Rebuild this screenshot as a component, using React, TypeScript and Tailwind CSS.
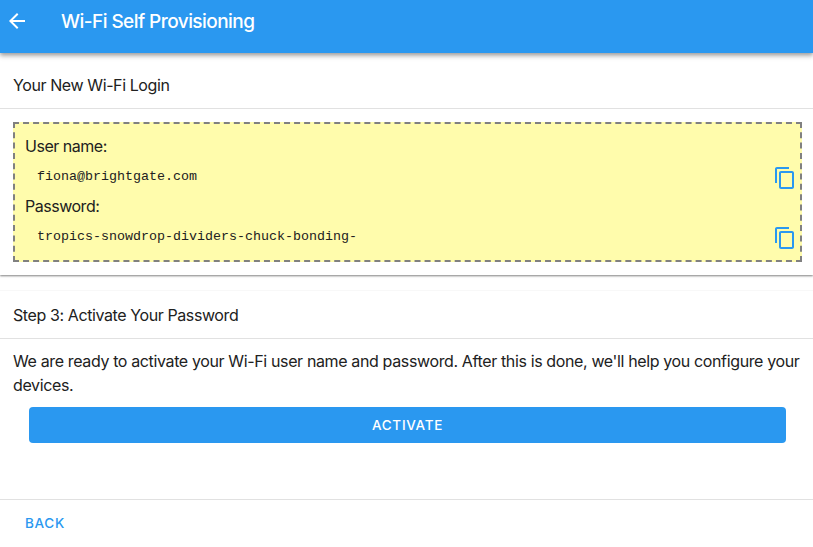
import type { ReactNode } from "react";

function CopyIcon() {
  return (
    <svg viewBox="0 0 24 24" className="size-6 shrink-0 fill-[#2a98f0]">
      <path d="M16 1H4c-1.1 0-2 .9-2 2v14h2V3h12V1zm3 4H8c-1.1 0-2 .9-2 2v14c0 1.1.9 2 2 2h11c1.1 0 2-.9 2-2V7c0-1.1-.9-2-2-2zm0 16H8V7h11v14z" />
    </svg>
  );
}

function SectionTitle({ children }: { children: ReactNode }) {
  return (
    <h2 className="flex h-12 items-center border-b border-[#e1e1e1] px-[13px] text-base tracking-[-0.4px]">
      {children}
    </h2>
  );
}

function Credential({ label, value }: { label: string; value: string }) {
  return (
    <div className="h-[60px]">
      <div className="h-[30px] pl-[10px] leading-[30px] tracking-[-0.48px]">{label}</div>
      <div className="flex h-[30px] items-center justify-between pr-[3px] pl-[22px]">
        <span className="pt-[2px] font-['Liberation_Mono',monospace] text-[13.33px] leading-[30px]">{value}</span>
        <button className="mt-[3px]" aria-label={"Copy " + label}>
          <CopyIcon />
        </button>
      </div>
    </div>
  );
}

export default function App() {
  return (
    <div className="flex h-[547px] w-[813px] flex-col overflow-hidden bg-white font-['Inter',sans-serif] text-base text-[#212121]">
      <header className="z-10 flex h-[53px] shrink-0 items-start bg-[#2a98f0] pt-[9px] pl-[5px] text-white shadow-[0_2px_4px_rgba(0,0,0,0.3),0_4px_5px_rgba(0,0,0,0.12)]">
        <svg viewBox="0 0 24 24" className="size-6 fill-white">
          <path d="M20 11H7.83l5.59-5.59L12 4l-8 8 8 8 1.41-1.41L7.83 13H20v-2z" />
        </svg>
        <h1 className="mt-px ml-8 text-[19px] leading-6 font-medium tracking-[-0.55px]">Wi-Fi Self Provisioning</h1>
      </header>

      <section className="h-[222px] shrink-0 pt-2 shadow-[0_1px_2px_rgba(0,0,0,0.5)]">
        <SectionTitle>Your New Wi-Fi Login</SectionTitle>
        <div className="mt-[13px] mr-[11px] ml-[13px] h-[140px] border-2 border-dashed border-[#808080] bg-[#fffcac] pt-[7px]">
          <Credential label="User name:" value="fiona@brightgate.com" />
          <Credential label="Password:" value="tropics-snowdrop-dividers-chuck-bonding-" />
        </div>
      </section>

      <section className="mt-[15px] h-[257px] shrink-0 border-t border-[#f8f8f8]">
        <SectionTitle>Step 3: Activate Your Password</SectionTitle>
        <p className="pt-[10px] pr-[11px] pl-[13px] leading-6 tracking-[-0.368px]">
          We are ready to activate your Wi-Fi user name and password. After this is done, we'll help you configure your
          devices.
        </p>
        <button className="mt-[10px] ml-[29px] flex h-9 w-[757px] items-center justify-center rounded bg-[#2a98f0] text-[13.5px] font-medium tracking-[0.7px] text-white">
          ACTIVATE
        </button>
        <div className="mt-14 border-t border-[#e1e1e1] pt-[11px] pl-[25px]">
          <button className="block h-6 text-[13.5px] leading-6 font-medium tracking-[0.7px] text-[#2a98f0]">BACK</button>
        </div>
      </section>
    </div>
  );
}
